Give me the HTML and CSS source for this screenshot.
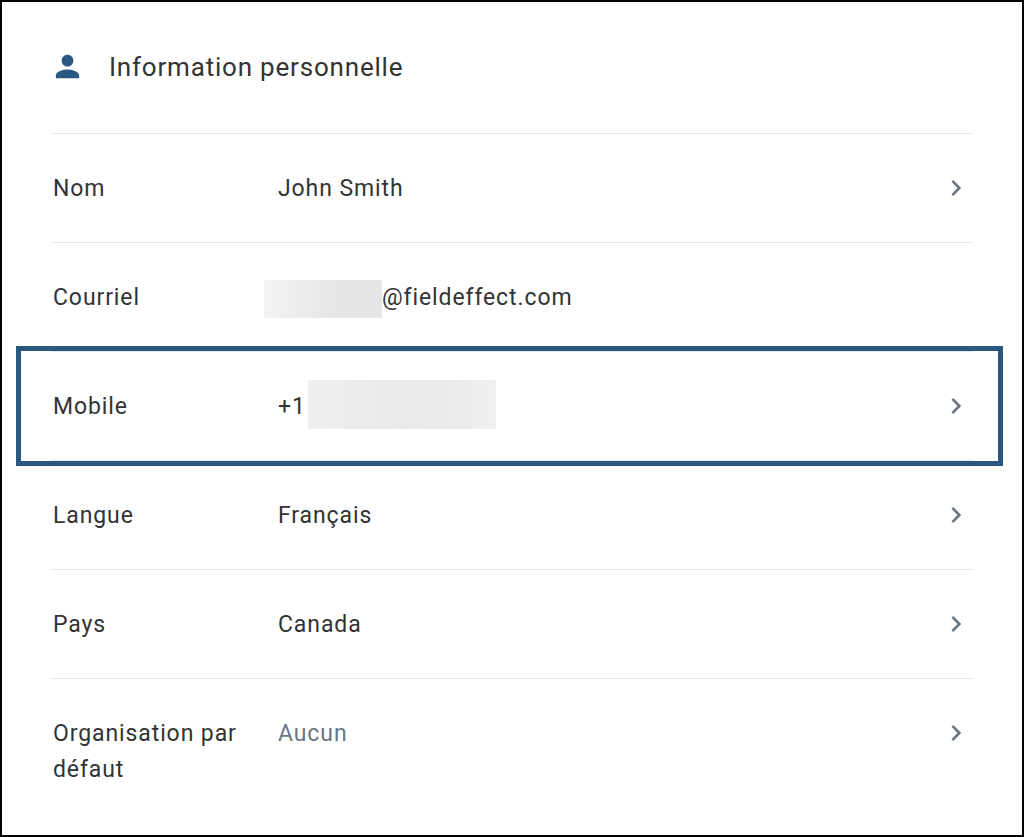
FILE: index.html
```html
<!DOCTYPE html>
<html lang="fr">
<head>
  <meta charset="UTF-8">
  <meta name="viewport" content="width=device-width, initial-scale=1.0">
  <title>Information personnelle</title>
  <link rel="stylesheet" href="styles.css">
</head>
<body>
  <div class="frame">
    <div class="card">
      <div class="card-header">
        <svg class="person-icon" viewBox="0 0 24 24" width="35" height="35"><path d="M12 12c2.21 0 4-1.79 4-4s-1.79-4-4-4-4 1.79-4 4 1.79 4 4 4zm0 2c-2.67 0-8 1.34-8 4v2h16v-2c0-2.66-5.33-4-8-4z"/></svg>
        <h2>Information personnelle</h2>
      </div>

      <div class="row">
        <div class="row-label">Nom</div>
        <div class="row-value">John Smith</div>
        <svg class="chevron" viewBox="0 0 24 24" width="24" height="24"><path d="M8.4 4.9 15.4 12l-7 7.1"/></svg>
      </div>

      <div class="row">
        <div class="row-label">Courriel</div>
        <div class="row-value"><span class="redacted redacted-email"></span>@fieldeffect.com</div>
      </div>

      <div class="row">
        <div class="row-label">Mobile</div>
        <div class="row-value">+1<span class="redacted redacted-phone"></span></div>
        <svg class="chevron" viewBox="0 0 24 24" width="24" height="24"><path d="M8.4 4.9 15.4 12l-7 7.1"/></svg>
      </div>

      <div class="row">
        <div class="row-label">Langue</div>
        <div class="row-value">Français</div>
        <svg class="chevron" viewBox="0 0 24 24" width="24" height="24"><path d="M8.4 4.9 15.4 12l-7 7.1"/></svg>
      </div>

      <div class="row">
        <div class="row-label">Pays</div>
        <div class="row-value">Canada</div>
        <svg class="chevron" viewBox="0 0 24 24" width="24" height="24"><path d="M8.4 4.9 15.4 12l-7 7.1"/></svg>
      </div>

      <div class="row">
        <div class="row-label">Organisation par défaut</div>
        <div class="row-value muted">Aucun</div>
        <svg class="chevron" viewBox="0 0 24 24" width="24" height="24"><path d="M8.4 4.9 15.4 12l-7 7.1"/></svg>
      </div>
    </div>

    <div class="highlight"></div>
  </div>
</body>
</html>
```

FILE: styles.css
```css
* { box-sizing: border-box; }
html, body {
  margin: 0;
  padding: 0;
  background: #fff;
}
body {
  font-family: 'Roboto', 'Liberation Sans', sans-serif;
  color: #333;
}
.frame {
  position: relative;
  height: 837px;
  border: 2px solid #000;
  overflow: hidden;
}
.card {
  padding: 0 48px;
}
.card-header {
  display: flex;
  align-items: center;
  height: 132px;
  padding: 0 0 2px 0;
  border-bottom: 1px solid #e8e8e8;
}
.card-header h2 {
  margin: 0 0 0 24px;
  font-size: 26px;
  font-weight: 400;
  letter-spacing: 0.8px;
}
.person-icon {
  flex: none;
  fill: #2a5880;
}
.row {
  display: flex;
  align-items: flex-start;
  padding: 37px 0 35px;
  border-bottom: 1px solid #e8e8e8;
  font-size: 23px;
  line-height: 36px;
  letter-spacing: 0.9px;
}
.row:last-child {
  border-bottom: 0;
}
.row-label {
  width: 228px;
  padding: 0 24px 0 3px;
  flex: none;
}
.row-value {
  flex: 1;
  display: flex;
  align-items: center;
  height: 36px;
}
.muted {
  color: #6b7685;
}
.chevron {
  flex: none;
  margin: 4.5px 6px 0 0;
  fill: none;
  stroke: #6b7480;
  stroke-width: 2.6;
}
.redacted {
  flex: none;
}
.redacted-email {
  width: 118px;
  height: 38px;
  margin: 2px 0 0 -14px;
  background: linear-gradient(90deg, #f3f3f3, #e6e6e6 60%, #e5e5e5);
}
.redacted-phone {
  width: 188px;
  height: 49px;
  margin: 0 0 6px 2px;
  background: linear-gradient(90deg, #efefef, #e9e9e9 50%, #ebebeb 80%, #f1f1f1);
}
.highlight {
  position: absolute;
  left: 14px;
  top: 344px;
  width: 987px;
  height: 120px;
  border: 5px solid #2a5880;
}
```
